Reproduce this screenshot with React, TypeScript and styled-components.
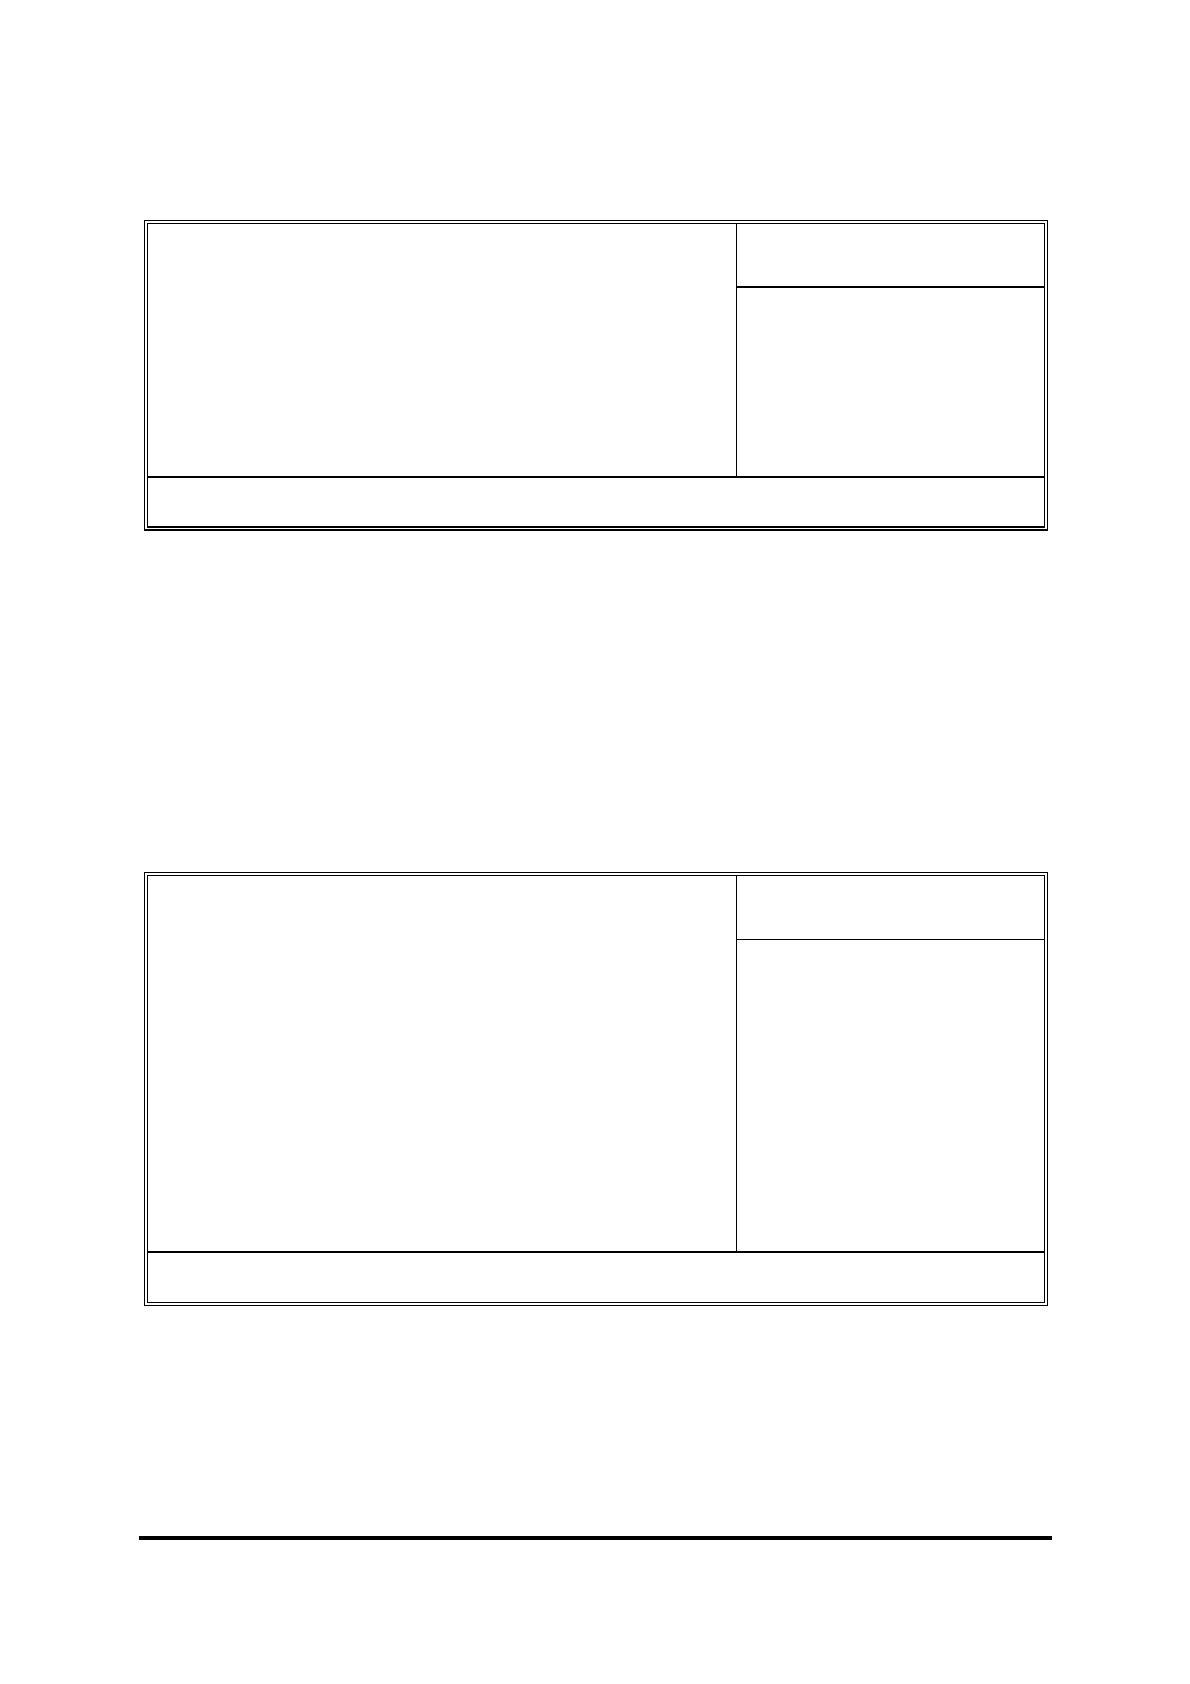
import React from "react";
import styled, { createGlobalStyle } from "styled-components";

const GlobalStyle = createGlobalStyle`
  *, *::before, *::after { box-sizing: border-box; }
  body { margin: 0; background: #fff; color: #000; font-family: "Liberation Serif", serif; }
`;

const Page = styled.main`
  display: flex;
  flex-direction: column;
  padding: 220px 138px 144px 139px;
`;

const Figures = styled.div`
  display: flex;
  flex-direction: column;
  gap: 341px;
  margin: 0 4px 230px 5px;
`;

const Frame = styled.section<{ $heavy?: boolean }>`
  border: 1px solid #000;
  border-bottom-width: ${(p) => (p.$heavy ? 2 : 1)}px;
  padding: 2px 2px ${(p) => (p.$heavy ? 1 : 2)}px;
`;

const Screen = styled.div<{ $heavy?: boolean }>`
  border: 1px solid #000;
  border-bottom-width: ${(p) => (p.$heavy ? 2 : 1)}px;
`;

const Panels = styled.div`
  display: grid;
  grid-template-columns: 588fr 308fr;
  border-bottom: 2px solid #000;
`;

const MainPanel = styled.div``;

const Side = styled.div`
  border-left: 1px solid #000;
`;

const SideHeader = styled.div<{ $heavy?: boolean }>`
  height: 64px;
  border-bottom: ${(p) => (p.$heavy ? 2 : 1)}px solid #000;
`;

const SideBody = styled.div<{ $height: number }>`
  min-height: ${(p) => p.$height}px;
`;

const Legend = styled.div<{ $height: number }>`
  min-height: ${(p) => p.$height}px;
`;

const FooterRule = styled.hr`
  width: 100%;
  height: 4px;
  margin: 0;
  border: 0;
  background: #000;
`;

interface SetupScreenProps {
  heavy?: boolean;
  bodyHeight: number;
  legendHeight: number;
}

function SetupScreen({ heavy, bodyHeight, legendHeight }: SetupScreenProps) {
  return (
    <Frame $heavy={heavy}>
      <Screen $heavy={heavy}>
        <Panels>
          <MainPanel />
          <Side>
            <SideHeader $heavy={heavy} />
            <SideBody $height={bodyHeight} />
          </Side>
        </Panels>
        <Legend $height={legendHeight} />
      </Screen>
    </Frame>
  );
}

export default function App() {
  return (
    <>
      <GlobalStyle />
      <Page>
        <Figures>
          <SetupScreen heavy bodyHeight={188} legendHeight={48} />
          <SetupScreen bodyHeight={311} legendHeight={49} />
        </Figures>
        <FooterRule />
      </Page>
    </>
  );
}
